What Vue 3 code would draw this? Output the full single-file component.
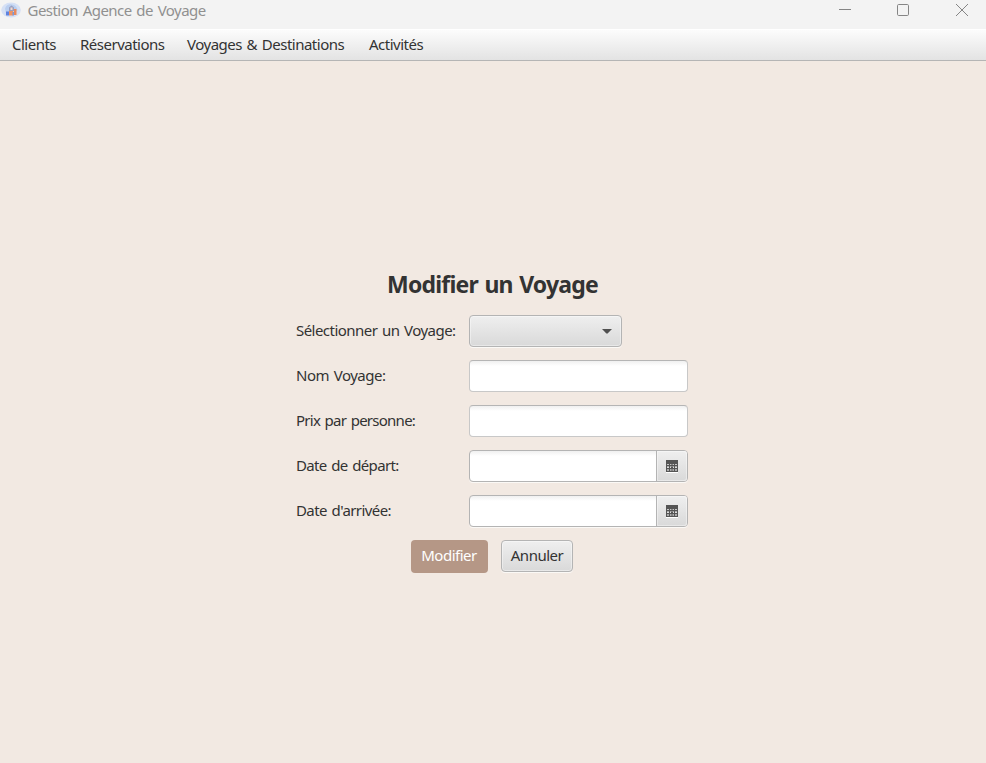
<script setup>
import { ref } from 'vue'

const menus = [
  { label: 'Clients', width: 45 },
  { label: 'Réservations', width: 84 },
  { label: 'Voyages & Destinations', width: 159 },
  { label: 'Activités', width: 56 },
]

const fields = [
  { label: 'Sélectionner un Voyage:', kind: 'combo', tracking: -0.54 },
  { label: 'Nom Voyage:', kind: 'text', tracking: -0.5 },
  { label: 'Prix par personne:', kind: 'text', tracking: -0.74 },
  { label: 'Date de départ:', kind: 'date', tracking: -0.64 },
  { label: "Date d'arrivée:", kind: 'date', tracking: -0.58 },
]

const values = ref(fields.map(() => ''))
</script>

<template>
  <div class="window">
    <header class="titlebar">
      <svg class="app-icon" width="20" height="16" viewBox="0 0 20 16">
        <ellipse cx="10" cy="8" rx="9.8" ry="7.6" fill="#d5e0f5" />
        <path d="M4 6.5Q6 1.5 11 2.5Q16 3.5 16.5 8L14 11L5 11Z" fill="#b9cef0" />
        <path d="M8 5.5L10.5 3.5L13 5.5V9H8Z" fill="#9a9fbe" />
        <path d="M9.5 5.5H11.5V8H9.5Z" fill="#f0d9d0" />
        <path d="M5 9.5H8V13.5H5Z" fill="#5f82de" />
        <path d="M8 9H12V13.5H8Z" fill="#ef9566" />
        <path d="M13 7H15.5V13H13Z" fill="#e88a5e" />
        <path d="M11.5 10H13V13.5H11.5Z" fill="#7a98d8" />
      </svg>
      <span class="caption">Gestion Agence de Voyage</span>
      <div class="controls">
        <svg width="12" height="12" viewBox="0 0 12 12"><path d="M0 5.5H12" /></svg>
        <svg width="12" height="12" viewBox="0 0 12 12"><rect x=".5" y=".5" width="11" height="11" rx="1.2" /></svg>
        <svg width="12" height="12" viewBox="0 0 12 12"><path d="M0 0L12 12M12 0L0 12" /></svg>
      </div>
    </header>

    <nav class="menubar">
      <span v-for="m in menus" :key="m.label" class="menu" :style="{ width: m.width + 'px' }">{{ m.label }}</span>
    </nav>

    <main class="content">
      <h1>Modifier un Voyage</h1>
      <form class="form" @submit.prevent>
        <div v-for="(f, i) in fields" :key="f.label" class="row">
          <label :style="{ letterSpacing: f.tracking + 'px' }">{{ f.label }}</label>
          <div v-if="f.kind === 'combo'" class="combo">
            <svg width="10" height="5" viewBox="0 0 10 5"><path d="M0 0H10L5.6 4.6H4.4Z" fill="#505050" /></svg>
          </div>
          <input v-else-if="f.kind === 'text'" v-model="values[i]" class="field" type="text" />
          <div v-else class="date">
            <input v-model="values[i]" type="text" />
            <button type="button" class="picker">
              <svg width="12" height="13" viewBox="0 0 12 13" shape-rendering="crispEdges">
                <path d="M0 12H12V13H0Z" fill="#fff" />
                <path d="M0 0H12V12H0Z" fill="#555" />
                <path d="M1 4H3V5H1ZM4 4H5V5H4ZM7 4H8V5H7ZM9 4H11V5H9Z" fill="#c8c8c8" />
                <path d="M1 6H3V7H1ZM4 6H5V7H4ZM7 6H8V7H7ZM9 6H11V7H9ZM1 9H3V11H1ZM4 9H5V11H4ZM7 9H8V11H7ZM9 9H11V11H9Z" fill="#aaa" />
                <path d="M1 7H3V8H1ZM4 7H5V8H4ZM7 7H8V8H7ZM9 7H11V8H9Z" fill="#ddd" />
                <path d="M5 4H7V5H5ZM5 6H7V7H5ZM5 9H7V11H5Z" fill="#858585" />
              </svg>
            </button>
          </div>
        </div>
        <div class="actions">
          <button type="button" class="btn primary">Modifier</button>
          <button type="button" class="btn">Annuler</button>
        </div>
      </form>
    </main>
  </div>
</template>

<style>
body {
  margin: 0;
  overflow: hidden;
}
</style>

<style scoped>
* {
  box-sizing: border-box;
}
.window {
  width: 986px;
  height: 763px;
  display: flex;
  flex-direction: column;
  background: #f2e9e2;
  color: #333;
  font: 15px/20px "Noto Sans", "Open Sans", sans-serif;
  letter-spacing: -0.5px;
  word-spacing: 1.3px;
}
.titlebar {
  height: 29px;
  display: flex;
  align-items: flex-start;
  background: #f3f3f3;
  color: #909090;
}
.app-icon {
  margin: 2px 6.5px 0 1px;
}
.caption {
  letter-spacing: -0.53px;
  white-space: nowrap;
}
.controls {
  display: flex;
  gap: 47px;
  margin: 4px 18px 0 auto;
}
.controls svg {
  fill: none;
  stroke: #858585;
  stroke-width: 1;
}
.controls svg:first-child {
  margin-right: -1px;
}
.menubar {
  height: 32px;
  display: flex;
  gap: 23px;
  padding: 5px 12px 0;
  background: linear-gradient(#fdfdfd, #e3e3e3);
  border-bottom: 1px solid #b5b5b5;
  box-shadow: inset 0 1px #fff;
}
.menu {
  white-space: nowrap;
}
.content {
  flex: 1;
  display: flex;
  flex-direction: column;
  align-items: center;
  padding: 208px 2px 0 0;
}
h1 {
  margin: 0 0 16px;
  font-size: 23px;
  line-height: 30px;
  font-weight: 700;
  letter-spacing: -0.8px;
  padding-left: 1px;
  white-space: nowrap;
}
.form {
  width: 392px;
  display: flex;
  flex-direction: column;
  gap: 13px;
}
.row {
  height: 32px;
  display: flex;
  align-items: center;
}
label {
  width: 173px;
  padding-bottom: 2px;
  white-space: nowrap;
}
.combo,
.picker,
.btn {
  border: 1px solid #b4b4b4;
  background: linear-gradient(#efefef, #d9d9d9);
  box-shadow: inset 0 0 0 1px rgba(255, 255, 255, 0.4), 0 1px rgba(255, 255, 255, 0.7);
}
.combo {
  width: 153px;
  height: 32px;
  display: flex;
  align-items: center;
  justify-content: flex-end;
  padding-right: 9px;
  border-radius: 4px;
}
.field,
.date {
  width: 219px;
  height: 32px;
  border: 1px solid #c8c8c8;
  border-top-color: #b5b5b5;
  border-radius: 4px;
  background: linear-gradient(#f0f0f0, #fff 5px);
  outline: none;
}
.date {
  display: flex;
  border-color: #b4b4b4;
  box-shadow: 0 1px rgba(255, 255, 255, 0.7);
}
.date input {
  width: 186px;
  border: 0;
  padding: 0 8px;
  background: transparent;
  outline: none;
}
.picker {
  width: 31px;
  height: 30px;
  display: flex;
  align-items: center;
  justify-content: center;
  padding: 1px 0 0;
  border-width: 0 0 0 1px;
  border-radius: 0 3px 3px 0;
  box-shadow: inset 0 0 0 1px rgba(255, 255, 255, 0.4);
}
.actions {
  display: flex;
  gap: 13px;
  padding-left: 115px;
}
.btn {
  width: 72px;
  height: 32px;
  padding: 0 0 2px;
  border-radius: 4px;
  color: #333;
  font: inherit;
  letter-spacing: inherit;
  white-space: nowrap;
}
.primary {
  width: 77px;
  height: 33px;
  border: 0;
  padding: 0 1px 3px 0;
  background: #b59786;
  color: #fff;
  box-shadow: none;
}
</style>
